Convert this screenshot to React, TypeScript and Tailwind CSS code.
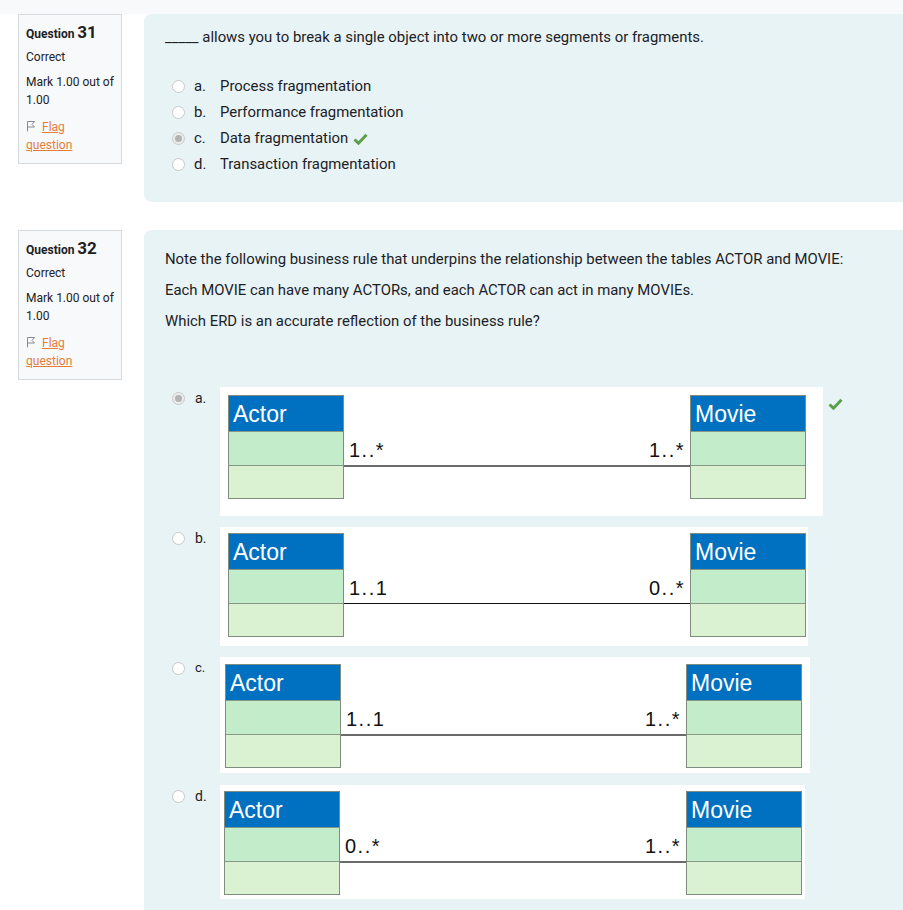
import React from "react";

function Radio({ checked }: { checked?: boolean }) {
  return checked ? (
    <span className="w-[13px] h-[13px] rounded-full border border-[#c9c9c9] bg-[#ececec] flex items-center justify-center shrink-0">
      <span className="w-[7px] h-[7px] rounded-full bg-[#b3b3b3]" />
    </span>
  ) : (
    <span className="w-[13px] h-[13px] rounded-full border border-[#c9c9c9] bg-white shrink-0" />
  );
}

function Check() {
  return (
    <svg width="15" height="12" viewBox="0 0 15 12" className="inline-block">
      <path d="M1.5 6.5 L5.5 10.2 L13.5 1.8" fill="none" stroke="#5b9f4a" strokeWidth="3" />
    </svg>
  );
}

function FlagIcon() {
  return (
    <svg width="10" height="12" viewBox="0 0 10 12" className="inline-block mr-[6px] align-[-1px]">
      <path d="M1.5 11.5 V1.5 L8.5 1.5 L6 4.5 L8.5 7 L1.5 7" fill="none" stroke="#8a8a8a" strokeWidth="1" />
    </svg>
  );
}

function InfoBox({ num }: { num: number }) {
  return (
    <div className="w-[104px] shrink-0 self-start border border-[#d6dadd] bg-[#f8f9fa] px-[7px] pt-[5px] pb-[9px] text-[12px] text-[#1d2125]">
      <div className="h-[24px] leading-[24px] font-bold">
        Question <span className="text-[17px]">{num}</span>
      </div>
      <div className="mt-[4px] leading-[18px]">Correct</div>
      <div className="mt-[7px] leading-[18px]">
        Mark 1.00 out of
        <br />
        1.00
      </div>
      <div className="mt-[9px] leading-[18px]">
        <FlagIcon />
        <a className="text-[#e57e3b] underline">
          Flag
          <br />
          question
        </a>
      </div>
    </div>
  );
}

function Table({ name }: { name: string }) {
  return (
    <div className="w-[116px] shrink-0 border border-[#7f8c80] flex flex-col">
      <div className="h-[35px] bg-[#0070c0] text-white text-[23px] leading-[37px] pl-[4px] font-['Liberation_Sans',sans-serif]">
        {name}
      </div>
      <div className="h-[34px] bg-[#c3edca] border-t border-[#869886]" />
      <div className="h-[33px] bg-[#daf1d2] border-t border-[#869886]" />
    </div>
  );
}

function Diagram({
  left,
  right,
  box,
  line,
}: {
  left: string;
  right: string;
  box: string;
  line: string;
}) {
  return (
    <div className={`bg-white flex ${box}`}>
      <Table name="Actor" />
      <div className="flex-1 flex flex-col pt-[36px]">
        <div className="h-[34px] flex justify-between items-end px-[5px] pb-[5px] text-[20px] leading-none tracking-[1.5px] text-[#111] font-['Liberation_Sans',sans-serif]">
          <span>{left}</span>
          <span>{right}</span>
        </div>
        <div className={line} />
      </div>
      <Table name="Movie" />
    </div>
  );
}

export default function App() {
  const q31 = [
    { l: "a.", t: "Process fragmentation" },
    { l: "b.", t: "Performance fragmentation" },
    { l: "c.", t: "Data fragmentation", ok: true },
    { l: "d.", t: "Transaction fragmentation" },
  ];

  return (
    <div className="min-h-[910px] bg-white font-['Roboto',sans-serif] text-[14.9px] text-[#1d2125] overflow-hidden">
      <div className="h-[14px] bg-[#f8f9fa]" />

      {/* question 31 */}
      <div className="flex pl-[18px]">
        <InfoBox num={31} />
        <div className="ml-[22px] flex-1 bg-[#e7f3f5] rounded-l-[8px] pl-[21px] pt-[12px] pb-[25px]">
          <p className="leading-[22px]">_____ allows you to break a single object into two or more segments or fragments.</p>
          <div className="mt-[25px] pl-[7px]">
            {q31.map((o) => (
              <div key={o.l} className="h-[26px] flex items-center">
                <Radio checked={o.ok} />
                <span className="ml-[9px] w-[26px]">{o.l}</span>
                <span>{o.t}</span>
                {o.ok && (
                  <span className="ml-[5px]">
                    <Check />
                  </span>
                )}
              </div>
            ))}
          </div>
        </div>
      </div>

      {/* question 32 */}
      <div className="flex pl-[18px] mt-[28px]">
        <InfoBox num={32} />
        <div className="ml-[22px] flex-1 bg-[#e7f3f5] rounded-tl-[8px] pl-[21px] pt-[18px] pb-[20px]">
          <p className="leading-[22px] mb-[9px]">
            Note the following business rule that underpins the relationship between the tables ACTOR and MOVIE:
          </p>
          <p className="leading-[22px] mb-[9px]">Each MOVIE can have many ACTORs, and each ACTOR can act in many MOVIEs.</p>
          <p className="leading-[22px]">Which ERD is an accurate reflection of the business rule?</p>

          <div className="mt-[55px] pl-[7px] flex flex-col gap-[11px]">
            <div className="flex items-start">
              <div className="w-[48px] flex items-center mt-[4px] h-[14px]">
                <Radio checked />
                <span className="ml-[10px] text-[14px]">a.</span>
              </div>
              <Diagram
                left="1..*"
                right="1..*"
                box="w-[603px] pl-[8px] pr-[17px] pt-[8px] pb-[17px]"
                line="h-[2px] bg-[#6b6b6b]"
              />
              <span className="ml-[5px] mt-[5px]">
                <Check />
              </span>
            </div>
            <div className="flex items-start">
              <div className="w-[48px] flex items-center mt-[4px] h-[14px]">
                <Radio />
                <span className="ml-[10px] text-[14px]">b.</span>
              </div>
              <Diagram
                left="1..1"
                right="0..*"
                box="w-[588px] pl-[8px] pr-[2px] pt-[6px] pb-[9px]"
                line="h-[1px] bg-[#111]"
              />
            </div>
            <div className="flex items-start">
              <div className="w-[48px] flex items-center mt-[4px] h-[14px]">
                <Radio />
                <span className="ml-[10px] text-[13px]">c.</span>
              </div>
              <Diagram
                left="1..1"
                right="1..*"
                box="w-[590px] pl-[5px] pr-[8px] pt-[7px] pb-[5px]"
                line="h-[2px] bg-[#6b6b6b]"
              />
            </div>
            <div className="flex items-start mt-[1px]">
              <div className="w-[48px] flex items-center mt-[4px] h-[14px]">
                <Radio />
                <span className="ml-[10px] text-[14px]">d.</span>
              </div>
              <Diagram
                left="0..*"
                right="1..*"
                box="w-[585px] pl-[4px] pr-[3px] pt-[6px] pb-[4px]"
                line="h-[2px] bg-[#6b6b6b]"
              />
            </div>
          </div>
        </div>
      </div>
    </div>
  );
}
